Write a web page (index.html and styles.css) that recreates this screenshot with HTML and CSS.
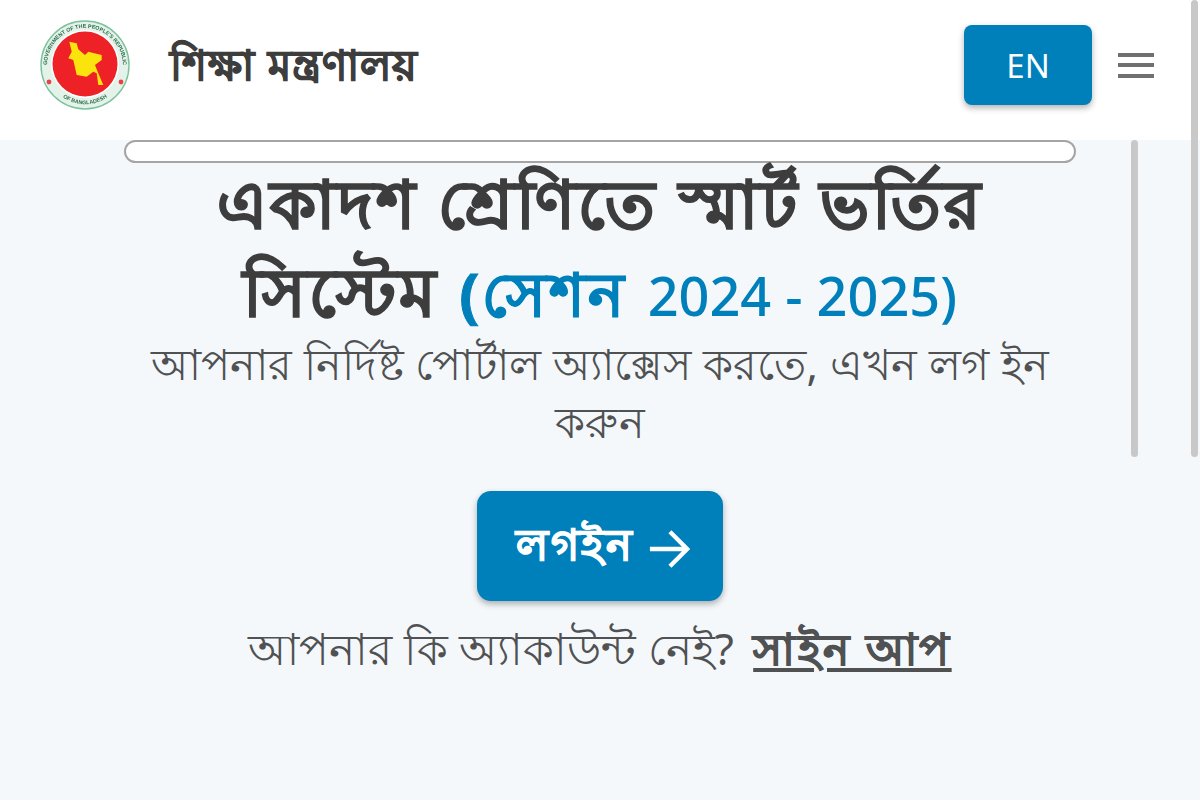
FILE: index.html
```html
<!DOCTYPE html>
<html lang="bn">
<head>
<meta charset="utf-8">
<title>শিক্ষা মন্ত্রণালয়</title>
<link rel="stylesheet" href="styles.css">
</head>
<body>
<header class="topbar">
  <div class="brand">
    <svg class="emblem" viewBox="0 0 90 90" aria-hidden="true">
      <defs>
        <path id="ring-top" d="M9 58A38 38 0 1 1 81 58"/>
        <path id="ring-bottom" d="M24 78A38 38 0 0 0 66 78"/>
        <filter id="soft"><feGaussianBlur stdDeviation="0.45"/></filter>
      </defs>
      <g filter="url(#soft)">
        <circle cx="45" cy="45" r="44" fill="#e4f3ea" stroke="#7cc29c" stroke-width="1.4"/>
        <circle cx="45" cy="44" r="34" fill="#fff"/>
        <circle cx="45" cy="44" r="32.5" fill="#ee2026"/>
        <text class="ring-text"><textPath href="#ring-top" startOffset="50%" text-anchor="middle">GOVERNMENT OF THE PEOPLE'S REPUBLIC</textPath></text>
        <text class="ring-text"><textPath href="#ring-bottom" startOffset="50%" text-anchor="middle">OF BANGLADESH</textPath></text>
        <path d="M29.3 21.7L36.7 23.3 38.3 29.3 45 35 48.3 31.7 61.7 35 61.7 40 55 45 58.3 53.3 63.3 65 58.3 65 56.7 53.3 53.3 51.7 46.7 56.7 36.7 55 33.3 40 28.3 38.3 31.7 31.7Z" fill="#fbe30f"/>
        <circle cx="9" cy="62" r="2.4" fill="#e8434a"/>
        <circle cx="81" cy="62" r="2.4" fill="#e8434a"/>
      </g>
    </svg>
    <span class="brand-name">শিক্ষা মন্ত্রণালয়</span>
  </div>
  <div class="actions">
    <button class="lang">EN</button>
    <div class="burger"><i></i><i></i><i></i></div>
  </div>
</header>
<main class="content">
  <div class="marquee"></div>
  <h1 class="title">একাদশ শ্রেণিতে স্মার্ট ভর্তির সিস্টেম <span class="session-bn">(সেশন</span> <span class="session">2024 - 2025)</span></h1>
  <p class="lead">আপনার নির্দিষ্ট পোর্টাল অ্যাক্সেস করতে, এখন লগ ইন করুন</p>
  <a class="login">লগইন
    <svg class="arrow" viewBox="0 0 44 44" aria-hidden="true"><path d="M2 22h38M23 4l18 18-18 18" fill="none" stroke="#fff" stroke-width="4.5"/></svg>
  </a>
  <p class="signup">আপনার কি অ্যাকাউন্ট নেই? <a class="signup-link">সাইন আপ</a></p>
  <div class="scroll-inner"></div>
</main>
<div class="scroll-outer"></div>
</body>
</html>
```
FILE: styles.css
```css
* { box-sizing: border-box; }
html, body { margin: 0; height: 100%; overflow: hidden; }
body { background: #f4f8fb; font-family: "Noto Sans", "Open Sans", "Noto Sans CJK SC", sans-serif; color: #3a3b3d; position: relative; }
.topbar { height: 140px; background: #fff; display: flex; align-items: center; justify-content: space-between; padding: 0 46px 10px 40px; }
.brand { display: flex; align-items: center; gap: 40px; }
.emblem { width: 90px; height: 90px; display: block; }
.ring-text { font: 700 5.4px "Liberation Sans", sans-serif; fill: #2f6e4c; }
.brand-name { font-size: 42px; font-weight: 700; letter-spacing: 1.2px; color: #3d3d3d; -webkit-text-stroke: 1px #3d3d3d; padding-top: 6px; }
.actions { display: flex; align-items: center; gap: 26px; }
.lang { width: 128px; height: 80px; background: #0080bb; color: #fff; border: 0; border-radius: 8px; font: 400 33px "Noto Sans", sans-serif; box-shadow: 0 3px 6px rgba(0,0,0,.3); }
.burger { width: 36px; display: flex; flex-direction: column; gap: 6.5px; }
.burger i { display: block; height: 4px; background: #707070; }
.content { display: flex; flex-direction: column; align-items: center; position: relative; padding: 0 124px; text-align: center; }
.marquee { width: 952px; height: 23px; background: #fff; border: 2px solid #a5a5a5; border-radius: 12px; }
.title { margin: -5px 0 -4px; max-width: 860px; font-size: 66px; line-height: 88px; font-weight: 700; letter-spacing: 3px; color: #3d3d3d; -webkit-text-stroke: 1.4px #3d3d3d; }
.session { font-size: 54px; font-weight: 500; letter-spacing: 0; color: #0080bb; -webkit-text-stroke: 0; }
.session-bn { font-size: 60px; letter-spacing: 3px; color: #0080bb; -webkit-text-stroke: 1px #0080bb; }
.lead { margin: 0; font-size: 43px; line-height: 58px; letter-spacing: 0.25px; font-weight: 400; color: #505153; }
.login { margin-top: 40px; width: 246px; height: 110px; padding: 5px 0 0 6px; background: #0080bb; color: #fff; border-radius: 14px; font-size: 43px; font-weight: 700; letter-spacing: 2.5px; display: flex; align-items: center; justify-content: center; gap: 14px; box-shadow: 0 3px 6px rgba(0,0,0,.3); -webkit-text-stroke: 1px #fff; }
.arrow { width: 42px; height: 42px; }
.signup { margin: 17px 0 0; font-size: 44px; line-height: 60px; color: #505153; }
.signup-link { font-size: 44px; font-weight: 700; letter-spacing: 2.5px; text-decoration: underline; margin-left: 8px; -webkit-text-stroke: 0.8px #505153; }
.scroll-inner { position: absolute; right: 62px; top: 0; width: 7px; height: 317px; background: #c8c8c8; border-radius: 4px; }
.scroll-outer { position: absolute; right: 2px; top: 0; width: 7px; height: 457px; background: #c8c8c8; border-radius: 4px; }
```
